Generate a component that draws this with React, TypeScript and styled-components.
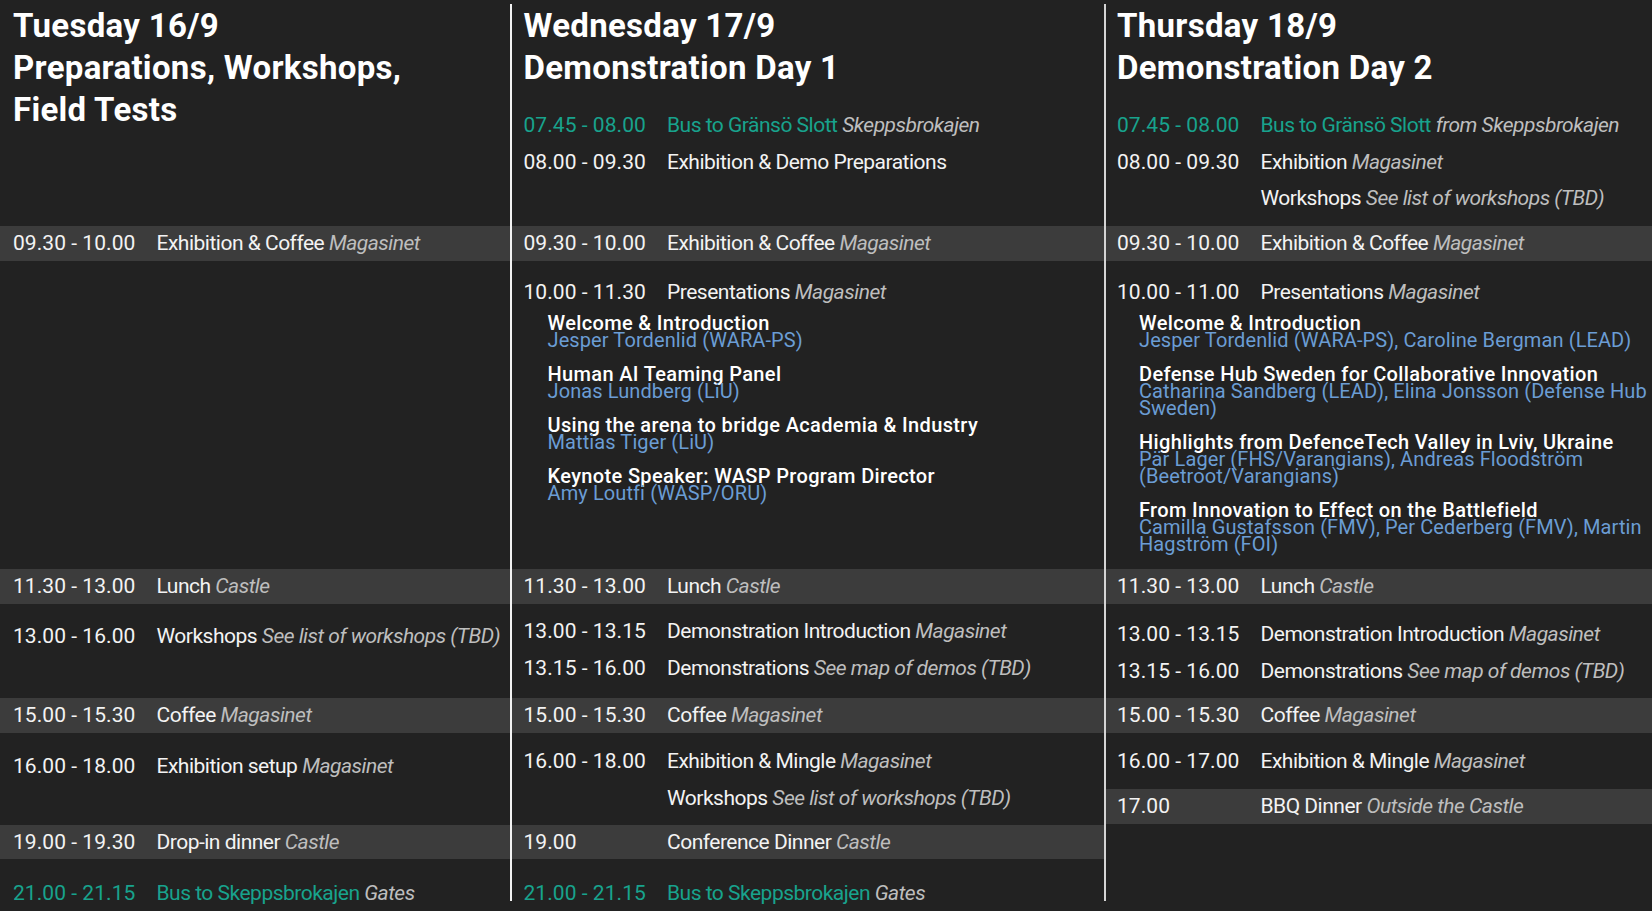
import React from "react";
import styled, { createGlobalStyle } from "styled-components";

const GlobalStyle = createGlobalStyle`
  html {
    overflow: hidden;
    background: #222222;
  }
  body {
    margin: 0;
    padding: 0;
    min-height: 100vh;
    background: #222222;
    font-family: Roboto, "Liberation Sans", Arial, sans-serif;
    color: #f3f3f3;
  }
  * { box-sizing: border-box; }
`;

type Metrics = {
  pad: number;
  indent: number;
  divider?: string;
};

type Entry = { time?: string; title: string; place?: string; bus?: boolean };
type Talk = { title: string; speakers: string };

type Section =
  | { kind: "header"; title: string[]; entries: Entry[] }
  | { kind: "band"; entry: Entry }
  | { kind: "list"; top: number; entries: Entry[]; talks?: Talk[]; band?: Entry }
  | { kind: "empty" };

type Day = { m: Metrics; sections: Section[] };

const TEAL = "#18a38d";
const BLUE = "#6b9dd4";
const PLACE = "#bebebe";
const BAND = "#3c3c3c";

const Page = styled.div`
  padding-top: 4px;
`;

const Schedule = styled.div`
  display: grid;
  grid-template-columns: 510px 594px 548px;
  grid-template-rows: 222px 35px 308px 35px 94px 35px 92px 34px 42px;
`;

const Cell = styled.div<{ $col: number; $row: number; $divider?: string; $top?: number }>`
  grid-column: ${(p) => p.$col};
  grid-row: ${(p) => p.$row};
  border-left: ${(p) => (p.$divider ? `2px solid ${p.$divider}` : "none")};
  padding-top: ${(p) => p.$top ?? 0}px;
  display: flex;
  flex-direction: column;
  min-width: 0;
`;

const BandCell = styled(Cell)`
  background: ${BAND};
  justify-content: center;
`;

const InlineBand = styled.div`
  background: ${BAND};
  height: 35px;
  margin-top: 9.5px;
  display: flex;
  flex-direction: column;
  justify-content: center;
`;

const Item = styled.div<{ $m: Metrics; $bus?: boolean }>`
  display: flex;
  align-items: baseline;
  flex: 0 0 auto;
  padding-left: ${(p) => p.$m.pad}px;
  height: 36.5px;
  line-height: 36px;
  font-size: 21px;
  letter-spacing: -0.5px;
  white-space: nowrap;
  color: ${(p) => (p.$bus ? TEAL : "#f3f3f3")};
`;

const Time = styled.span`
  flex: 0 0 143.5px;
  letter-spacing: 0.05px;
`;

const What = styled.span``;

const Place = styled.em`
  font-style: italic;
  color: ${PLACE};
`;

const Title = styled.h1<{ $m: Metrics }>`
  margin: 1px 0 0;
  padding-left: ${(p) => p.$m.pad}px;
  font-size: 33px;
  letter-spacing: 0.3px;
  line-height: 42px;
  font-weight: 700;
  color: #ffffff;
  white-space: nowrap;
`;

const EarlyList = styled.div`
  margin-top: 18px;
  display: flex;
  flex-direction: column;
`;

const TalkList = styled.div<{ $m: Metrics }>`
  margin: 4px 0 0 ${(p) => p.$m.pad + p.$m.indent}px;
  display: flex;
  flex-direction: column;
  gap: 17px;
`;

const TalkBlock = styled.div`
  font-size: 20px;
  line-height: 17px;
  white-space: pre;
`;

const TalkTitle = styled.div`
  font-weight: 500;
  color: #ffffff;
  letter-spacing: 0.35px;
`;

const Speakers = styled.div`
  color: ${BLUE};
  letter-spacing: 0.1px;
`;

const m1: Metrics = { pad: 13, indent: 23 };
const m2: Metrics = { pad: 11.5, indent: 24, divider: "#f2f2f2" };
const m3: Metrics = { pad: 11, indent: 22, divider: "#d4d4d4" };

const days: Day[] = [
  {
    m: m1,
    sections: [
      { kind: "header", title: ["Tuesday 16/9", "Preparations, Workshops,", "Field Tests"], entries: [] },
      { kind: "band", entry: { time: "09.30 - 10.00", title: "Exhibition & Coffee", place: "Magasinet" } },
      { kind: "empty" },
      { kind: "band", entry: { time: "11.30 - 13.00", title: "Lunch", place: "Castle" } },
      { kind: "list", top: 14, entries: [{ time: "13.00 - 16.00", title: "Workshops", place: "See list of workshops (TBD)" }] },
      { kind: "band", entry: { time: "15.00 - 15.30", title: "Coffee", place: "Magasinet" } },
      { kind: "list", top: 15, entries: [{ time: "16.00 - 18.00", title: "Exhibition setup", place: "Magasinet" }] },
      { kind: "band", entry: { time: "19.00 - 19.30", title: "Drop-in dinner", place: "Castle" } },
      { kind: "list", top: 16, entries: [{ time: "21.00 - 21.15", title: "Bus to Skeppsbrokajen", place: "Gates", bus: true }] },
    ],
  },
  {
    m: m2,
    sections: [
      {
        kind: "header",
        title: ["Wednesday 17/9", "Demonstration Day 1"],
        entries: [
          { time: "07.45 - 08.00", title: "Bus to Gränsö Slott", place: "Skeppsbrokajen", bus: true },
          { time: "08.00 - 09.30", title: "Exhibition & Demo Preparations" },
        ],
      },
      { kind: "band", entry: { time: "09.30 - 10.00", title: "Exhibition & Coffee", place: "Magasinet" } },
      {
        kind: "list",
        top: 13,
        entries: [{ time: "10.00 - 11.30", title: "Presentations", place: "Magasinet" }],
        talks: [
          { title: "Welcome & Introduction", speakers: "Jesper Tordenlid (WARA-PS)" },
          { title: "Human AI Teaming Panel", speakers: "Jonas Lundberg (LiU)" },
          { title: "Using the arena to bridge Academia & Industry", speakers: "Mattias Tiger (LiU)" },
          { title: "Keynote Speaker: WASP Program Director", speakers: "Amy Loutfi (WASP/ORU)" },
        ],
      },
      { kind: "band", entry: { time: "11.30 - 13.00", title: "Lunch", place: "Castle" } },
      {
        kind: "list",
        top: 9,
        entries: [
          { time: "13.00 - 13.15", title: "Demonstration Introduction", place: "Magasinet" },
          { time: "13.15 - 16.00", title: "Demonstrations", place: "See map of demos (TBD)" },
        ],
      },
      { kind: "band", entry: { time: "15.00 - 15.30", title: "Coffee", place: "Magasinet" } },
      {
        kind: "list",
        top: 10,
        entries: [
          { time: "16.00 - 18.00", title: "Exhibition & Mingle", place: "Magasinet" },
          { title: "Workshops", place: "See list of workshops (TBD)" },
        ],
      },
      { kind: "band", entry: { time: "19.00", title: "Conference Dinner", place: "Castle" } },
      { kind: "list", top: 16, entries: [{ time: "21.00 - 21.15", title: "Bus to Skeppsbrokajen", place: "Gates", bus: true }] },
    ],
  },
  {
    m: m3,
    sections: [
      {
        kind: "header",
        title: ["Thursday 18/9", "Demonstration Day 2"],
        entries: [
          { time: "07.45 - 08.00", title: "Bus to Gränsö Slott", place: "from Skeppsbrokajen", bus: true },
          { time: "08.00 - 09.30", title: "Exhibition", place: "Magasinet" },
          { title: "Workshops", place: "See list of workshops (TBD)" },
        ],
      },
      { kind: "band", entry: { time: "09.30 - 10.00", title: "Exhibition & Coffee", place: "Magasinet" } },
      {
        kind: "list",
        top: 13,
        entries: [{ time: "10.00 - 11.00", title: "Presentations", place: "Magasinet" }],
        talks: [
          { title: "Welcome & Introduction", speakers: "Jesper Tordenlid (WARA-PS), Caroline Bergman (LEAD)" },
          {
            title: "Defense Hub Sweden for Collaborative Innovation",
            speakers: "Catharina Sandberg (LEAD), Elina Jonsson (Defense Hub\nSweden)",
          },
          {
            title: "Highlights from DefenceTech Valley in Lviv, Ukraine",
            speakers: "Pär Lager (FHS/Varangians), Andreas Floodström\n(Beetroot/Varangians)",
          },
          {
            title: "From Innovation to Effect on the Battlefield",
            speakers: "Camilla Gustafsson (FMV), Per Cederberg (FMV), Martin\nHagström (FOI)",
          },
        ],
      },
      { kind: "band", entry: { time: "11.30 - 13.00", title: "Lunch", place: "Castle" } },
      {
        kind: "list",
        top: 12,
        entries: [
          { time: "13.00 - 13.15", title: "Demonstration Introduction", place: "Magasinet" },
          { time: "13.15 - 16.00", title: "Demonstrations", place: "See map of demos (TBD)" },
        ],
      },
      { kind: "band", entry: { time: "15.00 - 15.30", title: "Coffee", place: "Magasinet" } },
      {
        kind: "list",
        top: 10,
        entries: [{ time: "16.00 - 17.00", title: "Exhibition & Mingle", place: "Magasinet" }],
        band: { time: "17.00", title: "BBQ Dinner", place: "Outside the Castle" },
      },
      { kind: "empty" },
      { kind: "empty" },
    ],
  },
];

function EntryRow({ e, m }: { e: Entry; m: Metrics }) {
  return (
    <Item $m={m} $bus={e.bus}>
      <Time>{e.time ?? ""}</Time>
      <What>
        {e.title}
        {e.place && (
          <>
            {" "}
            <Place>{e.place}</Place>
          </>
        )}
      </What>
    </Item>
  );
}

function SectionCell({ s, col, row, m }: { s: Section; col: number; row: number; m: Metrics }) {
  if (s.kind === "band") {
    return (
      <BandCell $col={col} $row={row} $divider={m.divider}>
        <EntryRow e={s.entry} m={m} />
      </BandCell>
    );
  }
  if (s.kind === "header") {
    return (
      <Cell $col={col} $row={row} $divider={m.divider}>
        <Title $m={m}>
          {s.title.map((t, i) => (
            <React.Fragment key={t}>
              {i > 0 && <br />}
              {t}
            </React.Fragment>
          ))}
        </Title>
        {s.entries.length > 0 && (
          <EarlyList>
            {s.entries.map((e, i) => (
              <EntryRow key={i} e={e} m={m} />
            ))}
          </EarlyList>
        )}
      </Cell>
    );
  }
  if (s.kind === "list") {
    return (
      <Cell $col={col} $row={row} $divider={m.divider} $top={s.top}>
        {s.entries.map((e, i) => (
          <EntryRow key={i} e={e} m={m} />
        ))}
        {s.talks && (
          <TalkList $m={m}>
            {s.talks.map((t) => (
              <TalkBlock key={t.title}>
                <TalkTitle>{t.title}</TalkTitle>
                <Speakers>{t.speakers}</Speakers>
              </TalkBlock>
            ))}
          </TalkList>
        )}
        {s.band && (
          <InlineBand>
            <EntryRow e={s.band} m={m} />
          </InlineBand>
        )}
      </Cell>
    );
  }
  return <Cell $col={col} $row={row} $divider={m.divider} />;
}

export default function App() {
  return (
    <>
      <GlobalStyle />
      <Page>
        <Schedule>
          {days.map((d, ci) =>
            d.sections.map((s, ri) => (
              <SectionCell key={`${ci}-${ri}`} s={s} col={ci + 1} row={ri + 1} m={d.m} />
            ))
          )}
        </Schedule>
      </Page>
    </>
  );
}
